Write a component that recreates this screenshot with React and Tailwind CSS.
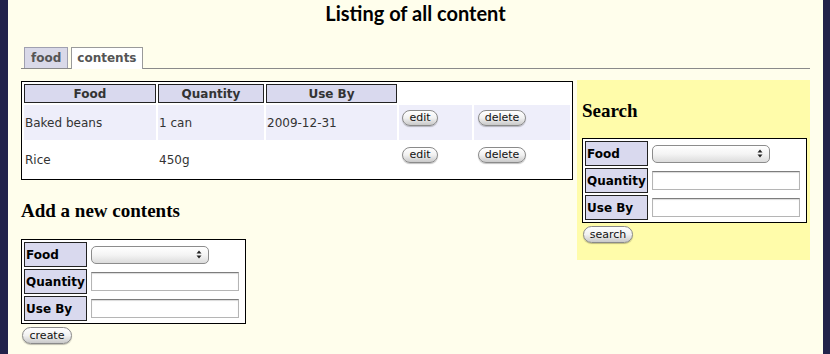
import React from "react";

// Aqua-ish pill button
const Pill = ({ children, className = "" }) => (
  <span
    className={`inline-flex items-center justify-center h-[16px] rounded-full border border-[#8a8a8a] bg-linear-to-b from-white via-[#f1f1f1] to-[#c9c9c9] text-[11px] leading-none text-[#111] shadow-[0_1px_1px_rgba(0,0,0,0.25)] ${className}`}
  >
    {children}
  </span>
);

const FakeSelect = () => (
  <div className="flex items-center justify-end w-[118px] h-[18px] rounded-[5px] border border-[#8c8c8c] bg-linear-to-b from-white via-[#f4f4f4] to-[#dcdcdc] pr-[6px]">
    <svg width="6" height="9" viewBox="0 0 6 9">
      <path d="M3 0.5 L5.5 3.5 L0.5 3.5 Z" fill="#222" />
      <path d="M3 8.5 L5.5 5.5 L0.5 5.5 Z" fill="#222" />
    </svg>
  </div>
);

const FakeInput = () => (
  <div className="w-[148px] h-[19px] bg-white border border-[#b5b5b5] border-t-[#7d7d7d] shadow-[inset_0_1px_1px_rgba(0,0,0,0.15)]" />
);

const FormTable = ({ button }) => (
  <div>
    <table className="border-separate border-spacing-[2px] border border-black bg-white">
      <tbody>
        {["Food", "Quantity", "Use By"].map((label) => (
          <tr key={label}>
            <td className="w-[61px] h-[25px] border border-[#222] bg-[#d9d9ee] px-[1px] text-[12px] leading-[16px] font-bold text-black align-middle">
              {label}
            </td>
            <td className="w-[154px] pl-[2px] align-middle">
              {label === "Food" ? <FakeSelect /> : <FakeInput />}
            </td>
          </tr>
        ))}
      </tbody>
    </table>
    <div className="flex mt-[3px] ml-[1px]">
      <Pill className="w-[50px] h-[17px]">{button}</Pill>
    </div>
  </div>
);

const rows = [
  { food: "Baked beans", qty: "1 can", use: "2009-12-31" },
  { food: "Rice", qty: "450g", use: "" },
];

export default function App() {
  return (
    <div className="flex h-[354px] w-[830px] bg-[#22224a] font-['DejaVu_Sans',sans-serif] text-[#333]">
      <div className="w-[8px]" />
      <div className="flex-1 bg-[#fffeec] px-[13px]">
        <h1 className="pt-[1px] text-center text-[20px] font-bold leading-[24px] text-black font-['Lato',sans-serif]">
          Listing of all content
        </h1>

        {/* Tabs */}
        <div className="mt-[22px] flex items-end gap-[3px] border-b border-[#8a8a8a] pl-[3px]">
          <div className="h-[21px] px-[6px] border border-b-0 border-[#a0a0b0] bg-[#d9d9e8] text-[12px] font-bold leading-[20px] text-[#555]">
            food
          </div>
          <div className="h-[22px] -mb-[1px] px-[5px] border border-b-0 border-[#9a9a9a] bg-white text-[12px] font-bold leading-[21px] text-[#555]">
            contents
          </div>
        </div>

        <div className="mt-[11px] flex items-start gap-[4px]">
          {/* Left column */}
          <div className="w-[552px]">
            <table className="mt-[1px] w-[552px] border-separate border-spacing-[2px] border border-black bg-white text-[12px] leading-[16px]">
              <thead>
                <tr>
                  {["Food", "Quantity", "Use By"].map((h, i) => (
                    <th
                      key={h}
                      className={`h-[19px] border border-[#222] bg-[#d9d9ee] text-center font-bold text-[#333] ${
                        i === 0 ? "w-[132px]" : i === 1 ? "w-[106px]" : "w-[131px]"
                      }`}
                    >
                      {h}
                    </th>
                  ))}
                  <th className="w-[73px]" />
                  <th />
                </tr>
              </thead>
              <tbody>
                {rows.map((r, i) => (
                  <tr key={r.food} className={i === 0 ? "bg-[#eeeefa]" : "bg-white"}>
                    <td className="h-[35px] pl-[1px] align-middle">{r.food}</td>
                    <td className="pl-[1px] align-middle">{r.qty}</td>
                    <td className="pl-[1px] align-middle">{r.use}</td>
                    <td className="align-top pt-[4px] pl-[3px]">
                      <Pill className="w-[36px]">edit</Pill>
                    </td>
                    <td className="align-top pt-[4px] pl-[4px]">
                      <Pill className="w-[48px]">delete</Pill>
                    </td>
                  </tr>
                ))}
              </tbody>
            </table>

            <h2 className="mt-[19px] text-[19px] font-bold leading-[24px] text-black font-['Liberation_Serif',serif]">
              Add a new contents
            </h2>
            <div className="mt-[16px]">
              <FormTable button="create" />
            </div>
          </div>

          {/* Search panel */}
          <div className="w-[233px] h-[180px] bg-[#fffcaa] pl-[5px] pt-[19px]">
            <h2 className="text-[19px] font-bold leading-[24px] text-black font-['Liberation_Serif',serif]">
              Search
            </h2>
            <div className="mt-[15px]">
              <FormTable button="search" />
            </div>
          </div>
        </div>
      </div>
      <div className="w-[7px]" />
    </div>
  );
}
